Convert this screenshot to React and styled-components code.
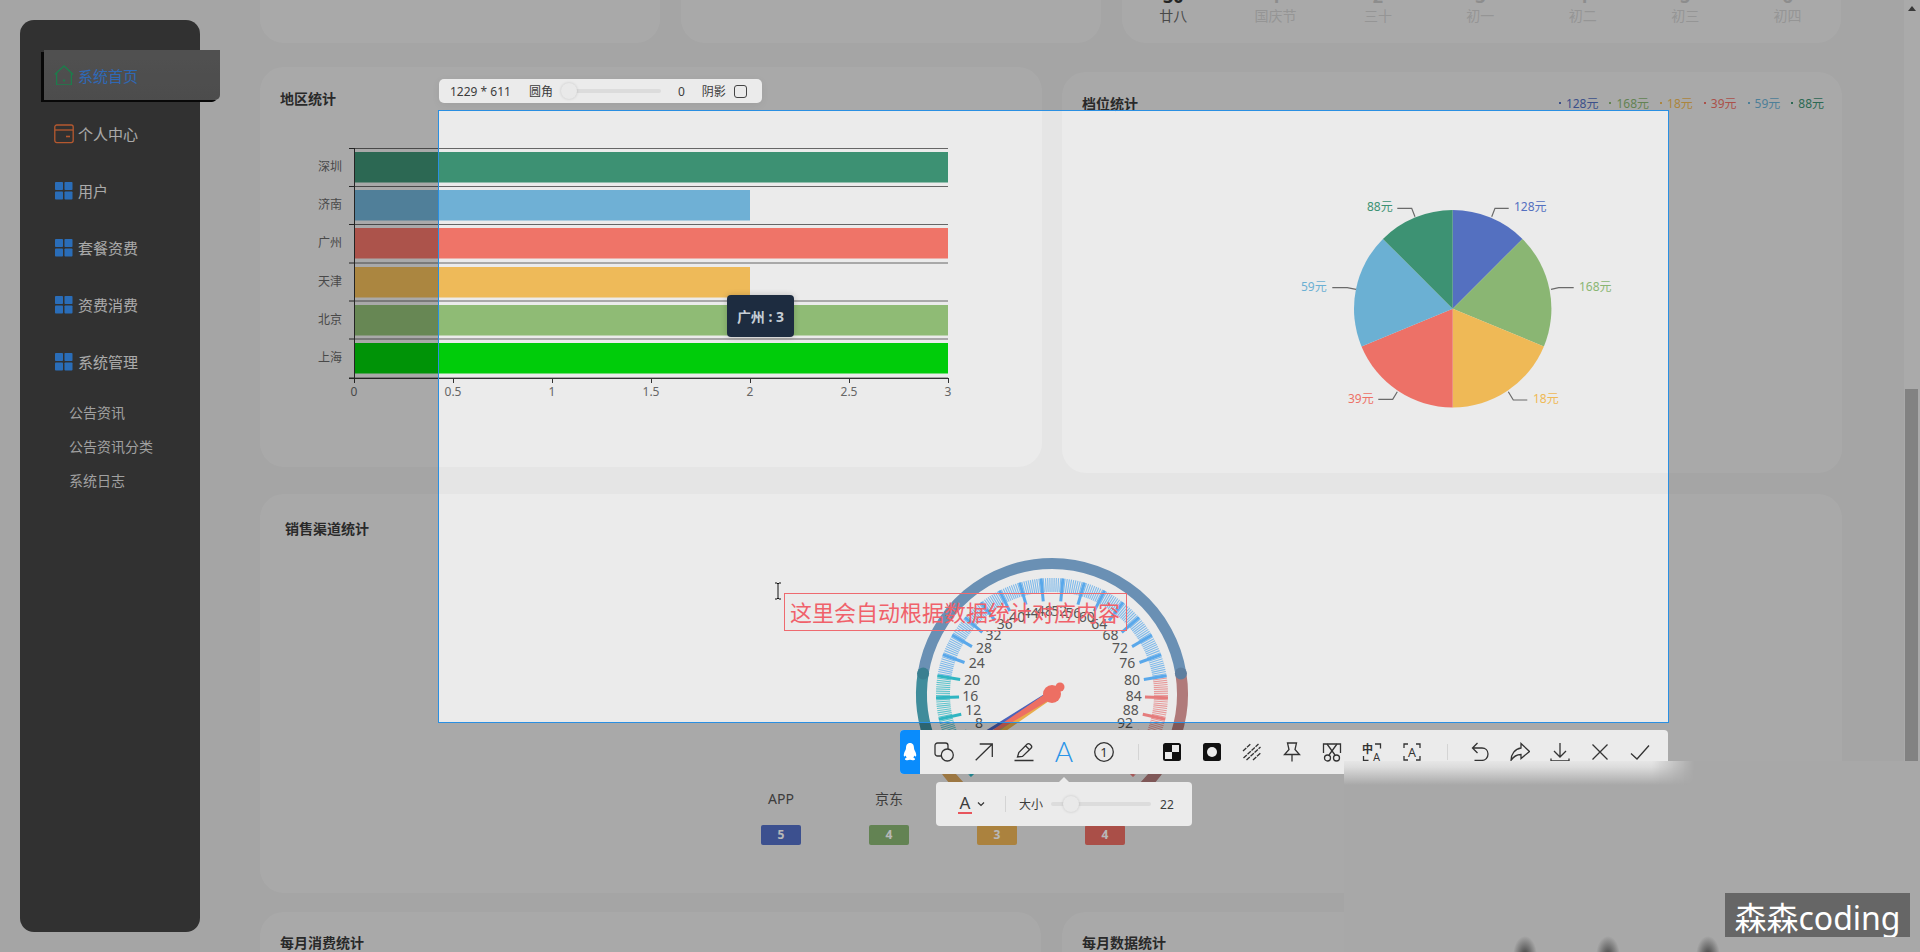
import React from 'react';
import styled, { createGlobalStyle } from 'styled-components';

const FONT = '"Noto Sans", "Noto Sans CJK SC", sans-serif';

const GlobalStyle = createGlobalStyle`
  html, body {
    margin: 0;
    padding: 0;
    background: #e5e5e5;
    overflow: hidden;
  }
  * { box-sizing: border-box; }
  text { font-family: ${FONT}; }
`;

const Page = styled.div`
  position: relative;
  display: flex;
  width: 1920px;
  height: 952px;
  overflow: hidden;
  background: #e5e5e5;
  font-family: ${FONT};
  color: #333;
`;

/* ---------- sidebar ---------- */
const Sidebar = styled.aside`
  flex: none;
  width: 180px;
  height: 912px;
  margin: 20px 0 0 20px;
  padding-top: 28px;
  background: #444;
  border-radius: 14px;
`;

const MenuItem = styled.div`
  display: flex;
  align-items: center;
  gap: 4px;
  height: 57px;
  padding-left: 34px;
  font-size: 15px;
  color: #ececec;
`;

const ActiveItem = styled(MenuItem)`
  height: 50px;
  margin: 2px -20px 5px 24px;
  padding-left: 10px;
  color: #4192fb;
  background: linear-gradient(#707070, #6a6a6a);
  border-bottom-right-radius: 5px;
  box-shadow: -3px 2px 0 #0c0c0c;
`;

const SubMenu = styled.div`
  margin-top: 5px;
  padding-left: 49px;
`;

const SubItem = styled.div`
  display: flex;
  align-items: center;
  height: 34px;
  font-size: 14px;
  color: #dedede;
`;

/* ---------- cards ---------- */
const Main = styled.main`
  flex: 1;
  min-width: 0;
  padding: 0 62px 0 60px;
`;

const Row = styled.div`
  display: grid;
  grid-template-columns: ${(p) => p.$cols};
  column-gap: ${(p) => p.$gap || 20}px;
  align-items: start;
  margin-top: ${(p) => p.$top || 0}px;
`;

const Card = styled.section`
  position: relative;
  height: ${(p) => p.$h}px;
  margin-top: ${(p) => p.$mt || 0}px;
  padding: ${(p) => p.$pad || '22px 20px'};
  background: #ebebeb;
  border-radius: 24px;
`;

const ClippedCard = styled(Card)`
  display: flex;
  flex-direction: column;
  justify-content: flex-end;
  padding: 0 0 17px;
  overflow: hidden;
  border-radius: 0 0 24px 24px;
`;

const CalendarGrid = styled.div`
  display: grid;
  grid-template-columns: repeat(7, 102.4px);
  text-align: center;
`;

const DateNum = styled.div`
  font-size: 18px;
  line-height: 20px;
  font-weight: 700;
  color: ${(p) => (p.$on ? '#333' : '#c4c4c4')};
`;

const Lunar = styled.div`
  font-size: 14px;
  line-height: 20px;
  color: ${(p) => (p.$on ? '#666' : '#cfcfcf')};
`;

const CardHead = styled.header`
  display: flex;
  justify-content: space-between;
  align-items: center;
  height: 20px;
`;

const Title = styled.h3`
  margin: 0;
  font-size: 14px;
  line-height: 20px;
  font-weight: 700;
  color: #3a3a3a;
`;

const PieLegend = styled.div`
  display: flex;
  gap: 11px;
  margin: -3px -2px 0 0;
  font-size: 12px;
`;

const LegendItem = styled.span`
  display: flex;
  align-items: center;
  gap: 5px;
  color: ${(p) => p.$c};
  &::before {
    content: '';
    width: 2px;
    height: 2px;
    background: ${(p) => p.$c};
  }
`;

const ChartSvg = styled.svg`
  display: block;
  margin: 0 ${(p) => -p.$bleed}px;
`;

const AxisText = styled.text`
  font-size: 12px;
  fill: #666;
`;

const Tooltip = styled.div`
  position: absolute;
  left: 467px;
  top: 228px;
  width: 67px;
  height: 42px;
  display: flex;
  align-items: center;
  justify-content: center;
  background: #1d2c40;
  border-radius: 4px;
  font-size: 14px;
  font-weight: 700;
  color: #c6ced6;
  box-shadow: 0 0 6px rgba(0, 0, 0, 0.2);
`;

const ChannelRow = styled.div`
  display: grid;
  grid-template-columns: repeat(4, 108px);
  margin-left: 442px;
  text-align: center;
`;

const ChannelName = styled.div`
  font-size: 14px;
  line-height: 20px;
  color: #555;
`;

const ChannelBadge = styled.div`
  width: 40px;
  height: 20px;
  margin: 16px auto 0;
  border-radius: 2px;
  background: ${(p) => p.$c};
  color: #fff;
  font-size: 12px;
  line-height: 20px;
  font-weight: 700;
`;

/* ---------- scrollbar ---------- */
const ScrollTrack = styled.div`
  flex: none;
  width: 16px;
  background: #ececec;
`;

const ScrollArrow = styled.div`
  margin: 6px 0 0 4px;
  width: 0;
  height: 0;
  border: 4px solid transparent;
  border-top: 0;
  border-bottom: 5px solid #505050;
`;

const ScrollThumb = styled.div`
  width: 13px;
  height: 372px;
  margin: 378px 0 0 1px;
  background: #b4b4b4;
`;

/* ---------- screenshot overlay ---------- */
const Selection = styled.div`
  position: absolute;
  left: 438px;
  top: 110px;
  width: 1231px;
  height: 613px;
  border: 1px solid #2a8fe2;
  box-shadow: 0 0 0 3000px rgba(0, 0, 0, 0.28);
  z-index: 10;
`;

const Panel = styled.div`
  position: absolute;
  display: flex;
  align-items: center;
  background: #ebebeb;
  font-size: 12px;
  color: #3c3c3c;
`;

const SizePanel = styled(Panel)`
  left: 0;
  top: -32px;
  width: 323px;
  height: 24px;
  padding-left: 11px;
  border-radius: 5px;
  box-shadow: 0 2px 8px rgba(0, 0, 0, 0.06);
`;

const PanelLabel = styled.span`
  flex: none;
  margin-left: ${(p) => p.$ml || 0}px;
  white-space: nowrap;
`;

const Slider = styled.div`
  position: relative;
  flex: none;
  width: ${(p) => p.$w}px;
  height: 4px;
  margin-left: ${(p) => p.$ml || 0}px;
  border-radius: 2px;
  background: #dcdcdc;
`;

const SliderThumb = styled.div`
  position: absolute;
  left: ${(p) => p.$left}px;
  top: -6px;
  width: 16px;
  height: 16px;
  border-radius: 50%;
  background: #e9e9e9;
  box-shadow: 0 0 3px rgba(0, 0, 0, 0.16);
`;

const CheckBox = styled.span`
  flex: none;
  width: 13px;
  height: 13px;
  margin-left: 8px;
  border: 1px solid #444;
  border-radius: 3px;
`;

const Toolbar = styled(Panel)`
  left: 461px;
  top: 619px;
  width: 768px;
  height: 44px;
  border-radius: 4px;
  overflow: hidden;
`;

const ToolLogo = styled.div`
  flex: none;
  display: flex;
  align-items: center;
  justify-content: center;
  width: 20px;
  height: 100%;
  margin-right: 4px;
  background: #0a8cfc;
`;

const ToolButton = styled.div`
  flex: none;
  display: flex;
  align-items: center;
  justify-content: center;
  width: 40px;
  height: 100%;
`;

const ToolDivider = styled.div`
  flex: none;
  width: 1px;
  height: 16px;
  margin: 0 ${(p) => p.$r}px 0 ${(p) => p.$l}px;
  background: #d4d4d4;
`;

const TextPanel = styled(Panel)`
  left: 497px;
  top: 671px;
  width: 256px;
  height: 44px;
  padding-left: 22px;
  border-radius: 4px;
  &::before {
    content: '';
    position: absolute;
    left: 123px;
    top: -5px;
    border: 5px solid transparent;
    border-top: 0;
    border-bottom: 5px solid #ebebeb;
  }
`;

const FontColor = styled.span`
  flex: none;
  width: 14px;
  font-size: 17px;
  line-height: 18px;
  text-align: center;
  color: #3c3c3c;
  border-bottom: 2px solid #e8555c;
`;

const Chevron = styled.svg`
  flex: none;
  margin-left: 5px;
`;

const Editor = styled.div`
  position: absolute;
  left: 345px;
  top: 482px;
  width: 343px;
  height: 38px;
  padding-left: 5px;
  border: 1px solid #ee6a6f;
  font-size: 22px;
  line-height: 36px;
  white-space: nowrap;
  color: #f0616a;
`;

const Cursor = styled.svg`
  position: absolute;
  left: 333px;
  top: 471px;
`;

/* compression smear left in the recording under the toolbar */
const Smear = styled.div`
  position: absolute;
  left: 1344px;
  top: 761px;
  width: 576px;
  height: 191px;
  z-index: 30;
  background:
    radial-gradient(12px 20px at 181px 195px, rgba(50, 50, 50, 0.9), transparent),
    radial-gradient(12px 20px at 264px 195px, rgba(50, 50, 50, 0.85), transparent),
    radial-gradient(12px 20px at 364px 195px, rgba(50, 50, 50, 0.9), transparent),
    #a8a8a8;
`;

const SmearGlow = styled.div`
  width: 350px;
  height: 24px;
  background: linear-gradient(#e6e6e6 0, #dcdcdc 6px, #a8a8a8 24px);
  mask-image: linear-gradient(90deg, #000 88%, transparent);
`;

const Watermark = styled.div`
  position: absolute;
  left: 1725px;
  top: 893px;
  width: 185px;
  height: 44px;
  z-index: 31;
  background: #666;
  color: #fff;
  font-size: 32px;
  line-height: 50px;
  text-align: center;
  white-space: nowrap;
  overflow: hidden;
`;

/* ---------- data ---------- */
const menu = ['用户', '套餐资费', '资费消费', '系统管理'];
const subMenu = ['公告资讯', '公告资讯分类', '系统日志'];
const calendar = [
  ['30', '廿八', true],
  ['1', '国庆节'],
  ['2', '三十'],
  ['3', '初一'],
  ['4', '初二'],
  ['5', '初三'],
  ['6', '初四'],
];

const bars = [
  ['深圳', 3, '#3d9173', 152],
  ['济南', 2, '#6fb0d5', 190],
  ['广州', 3, '#ef7468', 228],
  ['天津', 2, '#eeba59', 267],
  ['北京', 3, '#8fbb75', 305],
  ['上海', 3, '#00cc0a', 343],
];
const barTicks = [148.5, 186.5, 224.5, 263, 301, 339, 378];
const xTicks = [['0', 354], ['0.5', 453], ['1', 552], ['1.5', 651], ['2', 750], ['2.5', 849], ['3', 948]];

const PIE_C = [1452.7, 308.7];
const PIE_R = 98.7;
const pie = [
  { name: '128元', c: '#5470c0', from: 0, to: 45, line: '1491.7,216.7 1495,208.3 1508.7,208.3', x: 1514, y: 211 },
  { name: '168元', c: '#8ab673', from: 45, to: 112.5, line: '1551,289.3 1558.7,287.7 1573.7,287.7', x: 1579, y: 291 },
  { name: '18元', c: '#efb956', from: 112.5, to: 180, line: '1508.3,391.7 1513.3,400 1527.3,400', x: 1533, y: 403 },
  { name: '39元', c: '#ed7167', from: 180, to: 247.5, line: '1397.3,391.7 1392.7,399.3 1378.3,399.3', x: 1348, y: 403 },
  { name: '59元', c: '#6bb0d3', from: 247.5, to: 315, line: '1356,289.3 1347.3,287.7 1332.3,287.7', x: 1301, y: 291 },
  { name: '88元', c: '#3d9273', from: 315, to: 360, line: '1415,216.7 1411.7,208.3 1397.3,208.3', x: 1367, y: 211 },
];

const slicePath = ({ from, to }) => {
  const pt = (deg) => {
    const a = (deg * Math.PI) / 180;
    return `${PIE_C[0] + PIE_R * Math.sin(a)} ${PIE_C[1] - PIE_R * Math.cos(a)}`;
  };
  return `M${PIE_C[0]} ${PIE_C[1]} L${pt(from)} A${PIE_R} ${PIE_R} 0 0 1 ${pt(to)} Z`;
};

const channels = [
  ['APP', 5, '#5470c6'],
  ['京东', 4, '#8ab673'],
  ['天猫', 3, '#eeb556'],
  ['淘宝', 4, '#ec6e64'],
];

/* gauge geometry: 0-100 runs 225deg to -45deg */
const GX = 1052;
const GY = 694;
const toAngle = (v) => ((225 - 2.7 * v) * Math.PI) / 180;
const gp = (v, r) => [GX + r * Math.cos(toAngle(v)), GY - r * Math.sin(toAngle(v))];
const ringArc = (v0, v1, r) => {
  const [x0, y0] = gp(v0, r);
  const [x1, y1] = gp(v1, r);
  return `M${x0} ${y0} A${r} ${r} 0 ${(v1 - v0) * 2.7 > 180 ? 1 : 0} 1 ${x1} ${y1}`;
};
const tickColor = (v) => (v <= 20 ? '#2fb5c2' : v <= 80 ? '#5aa8ea' : '#e57c7c');
const minorTicks = Array.from({ length: 251 }, (_, i) => i * 0.4);
const majorTicks = Array.from({ length: 26 }, (_, i) => i * 4);

// labels in the picture sit a little up and inward on the diagonals
const labelPos = (v) => {
  const a = toAngle(v);
  const [x, y] = gp(v, 82);
  const skew = Math.abs(Math.sin(2 * a));
  return [x - Math.sign(Math.cos(a)) * 3 * skew, y - 5 * skew];
};

const needle = (v, c) => {
  const [tx, ty] = gp(v, 112);
  const a = toAngle(v);
  const nx = Math.sin(a) * 4;
  const ny = Math.cos(a) * 4;
  return { c, pts: `${GX - nx},${GY - ny} ${tx},${ty} ${GX + nx},${GY + ny}` };
};
const needles = [needle(5.6, '#4a63bb'), needle(4, '#8ab673'), needle(3, '#e8ad4c'), needle(4.6, '#ed6f63')];

/* ---------- icons ---------- */
const Icon = ({ children, size = 20, vb = 20, ...rest }) => (
  <svg width={size} height={size} viewBox={`0 0 ${vb} ${vb}`} fill="none" stroke="#333" strokeWidth="1.3" {...rest}>
    {children}
  </svg>
);

const HomeIcon = () => (
  <Icon stroke="#27ae68">
    <path d="M0.8 9.5 L10 1 L19.2 9.5 M2.6 8 V20 H17.4 V8" />
    <path d="M9 15.5 H11" strokeWidth="2" />
  </Icon>
);
const WalletIcon = () => (
  <Icon stroke="#fb7b42">
    <rect x="0.8" y="1" width="18.4" height="17.6" rx="2" />
    <path d="M1 6 H19" />
    <path d="M12 12.5 H16" strokeWidth="1.6" />
  </Icon>
);
const GridIcon = () => (
  <Icon stroke="none" fill="#3b97ff">
    <rect x="1" y="1" width="8" height="8" rx="0.8" />
    <rect x="10.5" y="1" width="8" height="8" rx="0.8" />
    <rect x="1" y="10.5" width="8" height="8" rx="0.8" />
    <rect x="10.5" y="10.5" width="8" height="8" rx="0.8" />
  </Icon>
);

const Penguin = () => (
  <svg width="14" height="18" viewBox="0 0 14 18" fill="#fff">
    <path d="M7 0 C10 0 11 2.5 11 5 C11 6 11.5 7 12.5 9 C13.5 11.5 13.5 13.5 12.5 13.5 C12 13.5 11.7 13 11.3 12.5 C11 13.5 10.7 14 10.3 14.5 C11.5 15 12 15.5 12 16.2 C12 17.2 10 17.5 8.5 17 L7 16.8 L5.5 17 C4 17.5 2 17.2 2 16.2 C2 15.5 2.5 15 3.7 14.5 C3.3 14 3 13.5 2.7 12.5 C2.3 13 2 13.5 1.5 13.5 C0.5 13.5 0.5 11.5 1.5 9 C2.5 7 3 6 3 5 C3 2.5 4 0 7 0 Z" />
  </svg>
);

const tools = [
  <Icon key="shape">
    <rect x="1" y="1" width="13" height="13" rx="2.5" />
    <circle cx="13.3" cy="13" r="6" fill="#ebebeb" />
  </Icon>,
  <Icon key="arrow">
    <path d="M1.7 18.3 L18.3 2 M5.7 2 H18.3 V15" />
  </Icon>,
  <Icon key="pen">
    <path d="M3.5 15 L4.8 10.5 L13 2.3 C14 1.3 15 1.3 16 2.3 L17 3.3 C18 4.3 18 5.3 17 6.3 L8.5 14.5 Z M11.5 3.8 L15.5 7.8" />
    <path d="M0.5 18.5 H19.5" strokeWidth="1.7" />
  </Icon>,
  <Icon key="text" stroke="none">
    <text x="10" y="19.5" fontSize="28" textAnchor="middle" fill="#2a95e8" style={{ fontFamily: 'Lato, sans-serif', fontWeight: 300 }}>A</text>
  </Icon>,
  <Icon key="serial">
    <circle cx="10" cy="10" r="9.3" />
    <text x="10" y="14.5" fontSize="13" textAnchor="middle" fill="#333" stroke="none">1</text>
  </Icon>,
  'divider-a',
  <Icon key="mosaic" stroke="none">
    <rect x="1" y="1" width="18" height="18" rx="2.5" fill="#111" />
    <rect x="10" y="3" width="7" height="7" fill="#ebebeb" />
    <rect x="3" y="10" width="7" height="7" fill="#ebebeb" />
  </Icon>,
  <Icon key="blur" stroke="none">
    <rect x="1" y="1" width="18" height="18" rx="2.5" fill="#111" />
    <circle cx="10" cy="10" r="5" fill="#ebebeb" />
  </Icon>,
  <Icon key="hatch">
    <path d="M1 9 L9 1.5 M1.5 16 L16.5 2 M4.5 18 L18.5 5 M11 18 L18.5 11" strokeDasharray="4.5 1" />
  </Icon>,
  <Icon key="pin">
    <path d="M5.5 1 H14.5 L13 7.5 L17.5 12.5 H2.5 L7 7.5 Z" />
    <path d="M10 12.5 V19.5" />
  </Icon>,
  <Icon key="scissors">
    <path d="M1.500 11 V2 H18.5 V11" />
    <path d="M5 2 L13 13 M15 2 L7 13" />
    <circle cx="5.5" cy="16" r="3" />
    <circle cx="14.5" cy="16" r="3" />
  </Icon>,
  <Icon key="translate">
    <text x="5.5" y="11" fontSize="11" fontWeight="700" textAnchor="middle" fill="#333" stroke="none">中</text>
    <text x="14.5" y="19.5" fontSize="12" textAnchor="middle" fill="#333" stroke="none">A</text>
    <path d="M13 2 H18.5 V6.5 M1.5 14 V18.5 H6.5" />
  </Icon>,
  <Icon key="ocr">
    <path d="M2 6 V2 H6 M14 2 H18 V6 M18 14 V18 H14 M6 18 H2 V14" />
    <text x="10" y="14.5" fontSize="12.5" textAnchor="middle" fill="#333" stroke="none">A</text>
  </Icon>,
  'divider-b',
  <Icon key="undo">
    <path d="M7.5 1 L2.5 6 L7.5 11 M2.5 6 H12 C15.5 6 18 8.5 18 12 C18 15.5 15.5 18.5 12 18.5 H4.5" />
  </Icon>,
  <Icon key="redo">
    <path d="M11 1.5 L19.5 9.5 L11 16.5 V12.5 C6 12.5 3.5 14.5 1 18.5 C1 12 5 7 11 6 Z" />
  </Icon>,
  <Icon key="save">
    <path d="M10 1 V15 M4 9 L10 15 L16 9 M1 16.5 V18.8 H19 V16.5" />
  </Icon>,
  <Icon key="close">
    <path d="M2.5 2.5 L17.5 17.5 M17.5 2.5 L2.5 17.5" />
  </Icon>,
  <Icon key="ok">
    <path d="M1 11.5 L7 17 L19 3.5" />
  </Icon>,
];

const BarChart = () => (
  <ChartSvg $bleed={20} width="782" height="300" viewBox="260 109 782 300">
    {bars.map(([name, v, c, y]) => (
      <rect key={name} x="354" y={y} width={v * 198} height="30.5" fill={c} />
    ))}
    {barTicks.map((y) => (
      <g key={y}>
        <path d={`M354 ${y} H948`} stroke="#666" strokeWidth="1" />
        <path d={`M349 ${y} H354`} stroke="#333" strokeWidth="1" />
      </g>
    ))}
    <path d="M354.5 148 V378 M349 378.5 H948.5" stroke="#333" strokeWidth="1" />
    {xTicks.map(([t, x]) => (
      <g key={t}>
        <path d={`M${x + 0.5} 378 V383`} stroke="#333" strokeWidth="1" />
        <AxisText x={x} y={396} textAnchor="middle">{t}</AxisText>
      </g>
    ))}
    {bars.map(([name, , , y]) => (
      <AxisText key={name} x="342" y={y + 18.5} textAnchor="end">{name}</AxisText>
    ))}
  </ChartSvg>
);

const PieChart = () => (
  <ChartSvg $bleed={20} width="780" height="320" viewBox="1062 114 780 320">
    {pie.map((s) => (
      <path key={s.name} d={slicePath(s)} fill={s.c} />
    ))}
    {pie.map((s) => (
      <g key={s.name}>
        <polyline points={s.line} fill="none" stroke="#6a6a6a" strokeWidth="1.2" />
        <text x={s.x} y={s.y} fontSize="12" fill={s.c}>{s.name}</text>
      </g>
    ))}
  </ChartSvg>
);

const GaugeChart = () => {
  const joints = [gp(20, 130.5), gp(80, 130.5)];
  return (
    <ChartSvg $bleed={25} width="1582" height="250" viewBox="260 539 1582 250">
      <path d={ringArc(0, 8, 130.5)} fill="none" stroke="#d9a55c" strokeWidth="11" />
      <path d={ringArc(8, 20, 130.5)} fill="none" stroke="#3f8c9b" strokeWidth="11" />
      <path d={ringArc(20, 80, 130.5)} fill="none" stroke="#6a90b4" strokeWidth="11" />
      <path d={ringArc(80, 100, 130.5)} fill="none" stroke="#b07a7a" strokeWidth="11" />
      <circle cx={joints[0][0]} cy={joints[0][1]} r="6" fill="#3a7f90" />
      <circle cx={joints[1][0]} cy={joints[1][1]} r="6" fill="#5f7f9f" />
      {minorTicks.map((v) => {
        const [x0, y0] = gp(v, 116);
        const [x1, y1] = gp(v, 102);
        return <line key={v} x1={x0} y1={y0} x2={x1} y2={y1} stroke={tickColor(v)} strokeOpacity="0.75" strokeWidth="1.1" />;
      })}
      {majorTicks.map((v) => {
        const [x0, y0] = gp(v, 116);
        const [x1, y1] = gp(v, 93);
        const [lx, ly] = labelPos(v);
        return (
          <g key={v}>
            <line x1={x0} y1={y0} x2={x1} y2={y1} stroke={tickColor(v)} strokeWidth="3" />
            <text x={lx} y={ly + 5} fontSize="14" textAnchor="middle" fill="#555">{v}</text>
          </g>
        );
      })}
      {needles.map((n) => (
        <polygon key={n.c} points={n.pts} fill={n.c} />
      ))}
      <circle cx={GX} cy={GY} r="9" fill="#ed6f63" />
      <circle cx="1060" cy="687" r="4.5" fill="#ed6f63" />
    </ChartSvg>
  );
};

export default function App() {
  return (
    <Page>
      <GlobalStyle />
      <Sidebar>
        <ActiveItem>
          <HomeIcon />
          系统首页
        </ActiveItem>
        <MenuItem>
          <WalletIcon />
          个人中心
        </MenuItem>
        {menu.map((m) => (
          <MenuItem key={m}>
            <GridIcon />
            {m}
          </MenuItem>
        ))}
        <SubMenu>
          {subMenu.map((m) => (
            <SubItem key={m}>{m}</SubItem>
          ))}
        </SubMenu>
      </Sidebar>

      <Main>
        <Row $cols="400px 420px 719px" $gap={21}>
          <ClippedCard $h={43} />
          <ClippedCard $h={43} />
          <ClippedCard $h={43}>
            <CalendarGrid>
              {calendar.map(([d, , on]) => (
                <DateNum key={d} $on={on}>{d}</DateNum>
              ))}
              {calendar.map(([d, l, on]) => (
                <Lunar key={d} $on={on}>{l}</Lunar>
              ))}
            </CalendarGrid>
          </ClippedCard>
        </Row>

        <Row $cols="782px 780px" $top={24}>
          <Card $h={400}>
            <CardHead>
              <Title>地区统计</Title>
            </CardHead>
            <BarChart />
            <Tooltip>广州 : 3</Tooltip>
          </Card>
          <Card $h={401} $mt={5}>
            <CardHead>
              <Title>档位统计</Title>
              <PieLegend>
                {pie.map((s) => (
                  <LegendItem key={s.name} $c={s.c}>{s.name}</LegendItem>
                ))}
              </PieLegend>
            </CardHead>
            <PieChart />
          </Card>
        </Row>

        <Row $cols="1582px" $top={21}>
          <Card $h={399} $pad="25px">
            <CardHead>
              <Title>销售渠道统计</Title>
            </CardHead>
            <GaugeChart />
            <ChannelRow>
              {channels.map(([n, v, c]) => (
                <div key={n}>
                  <ChannelName>{n}</ChannelName>
                  <ChannelBadge $c={c}>{v}</ChannelBadge>
                </div>
              ))}
            </ChannelRow>
          </Card>
        </Row>

        <Row $cols="781px 780px" $top={19} $gap={21}>
          <Card $h={300} $pad="21px 20px">
            <Title>每月消费统计</Title>
          </Card>
          <Card $h={300} $pad="21px 20px">
            <Title>每月数据统计</Title>
          </Card>
        </Row>
      </Main>

      <ScrollTrack>
        <ScrollArrow />
        <ScrollThumb />
      </ScrollTrack>

      <Selection>
        <SizePanel>
          <PanelLabel>1229 * 611</PanelLabel>
          <PanelLabel $ml={18}>圆角</PanelLabel>
          <Slider $w={99} $ml={9}>
            <SliderThumb $left={-1} />
          </Slider>
          <PanelLabel $ml={17}>0</PanelLabel>
          <PanelLabel $ml={17}>阴影</PanelLabel>
          <CheckBox />
        </SizePanel>

        <Editor>这里会自动根据数据统计对应内容</Editor>
        <Cursor width="12" height="18" viewBox="0 0 12 18" fill="none" stroke="#111" strokeWidth="1">
          <path d="M3 1 H5 L6 2 L7 1 H9 M6 2 V16 M3 17 H5 L6 16 L7 17 H9" />
        </Cursor>

        <Toolbar>
          <ToolLogo>
            <Penguin />
          </ToolLogo>
          {tools.map((t) => {
            if (t === 'divider-a') return <ToolDivider key={t} $l={14} $r={13} />;
            if (t === 'divider-b') return <ToolDivider key={t} $l={15} $r={12} />;
            return <ToolButton key={t.key}>{t}</ToolButton>;
          })}
        </Toolbar>

        <TextPanel>
          <FontColor>A</FontColor>
          <Chevron width="8" height="6" viewBox="0 0 8 6" fill="none" stroke="#333" strokeWidth="1.2">
            <path d="M1 1.5 L4 4.500 L7 1.5" />
          </Chevron>
          <ToolDivider $l={20} $r={13} />
          <PanelLabel>大小</PanelLabel>
          <Slider $w={100} $ml={8}>
            <SliderThumb $left={12} />
          </Slider>
          <PanelLabel $ml={9}>22</PanelLabel>
        </TextPanel>
      </Selection>

      <Smear>
        <SmearGlow />
      </Smear>
      <Watermark>森森coding</Watermark>
    </Page>
  );
}
